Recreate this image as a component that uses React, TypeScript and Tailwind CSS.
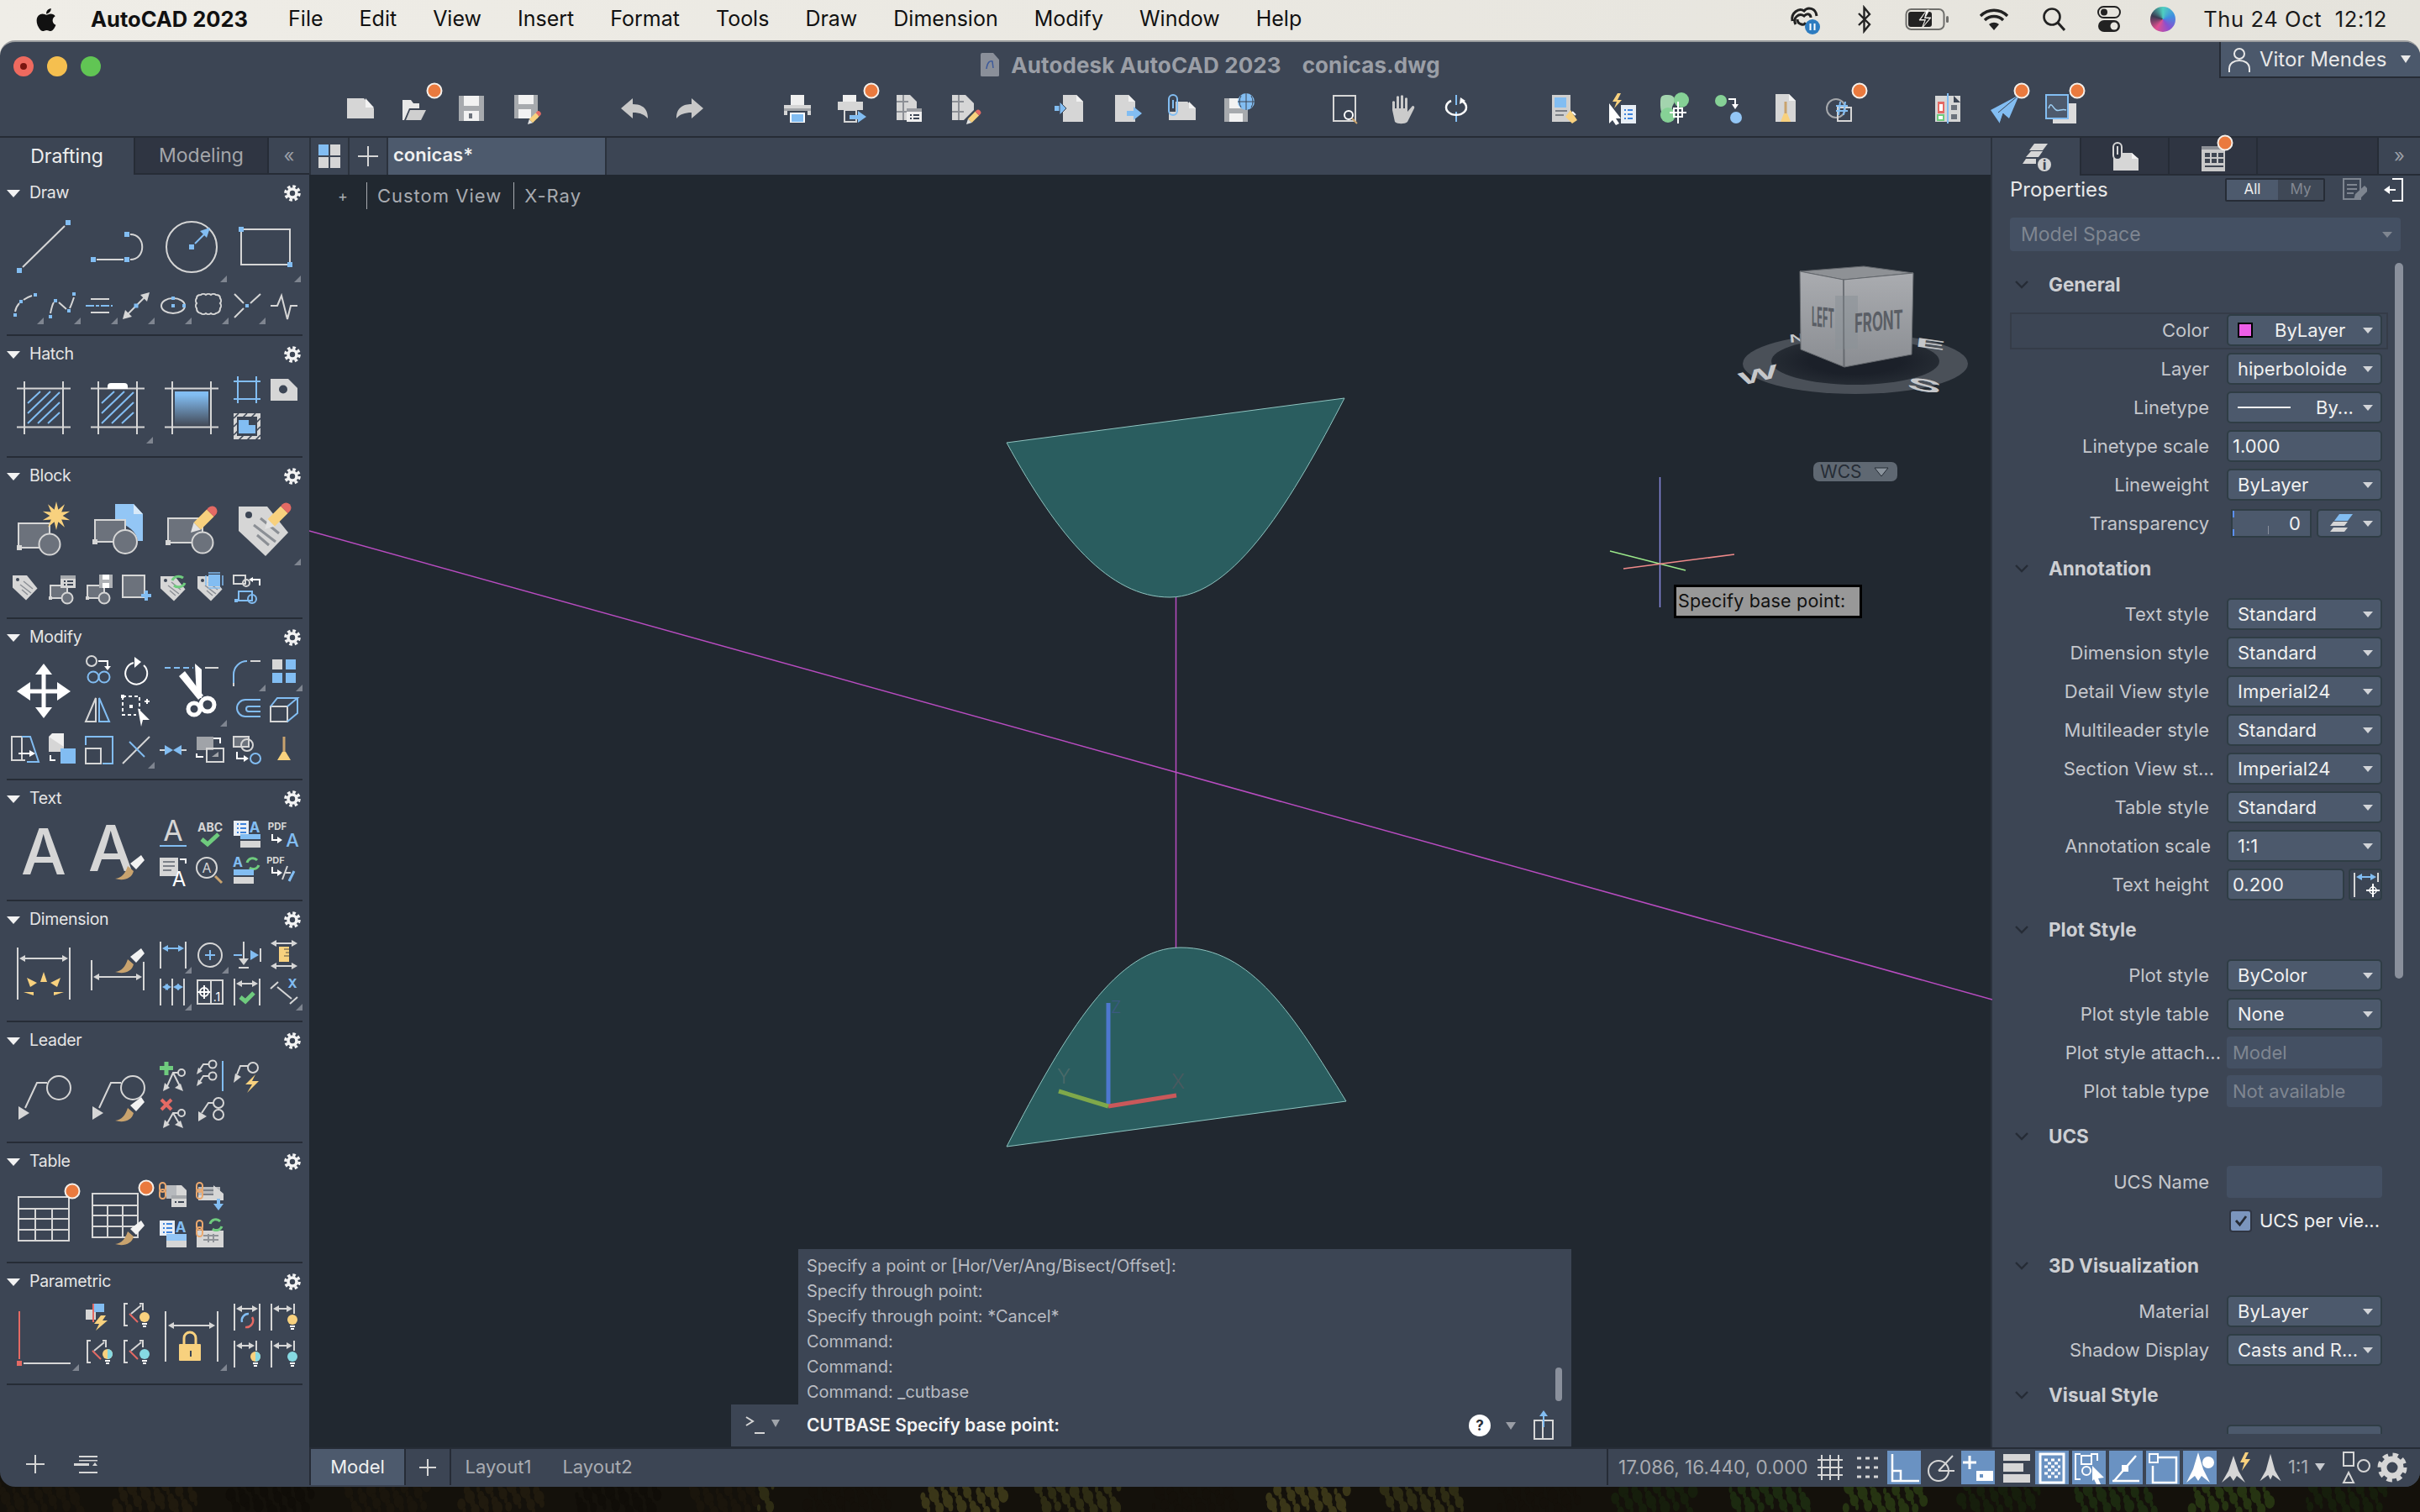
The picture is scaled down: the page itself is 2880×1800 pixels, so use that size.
import type { ReactNode } from 'react';
import { FaApple } from 'react-icons/fa';

const L = '#d6d6d6', W = '#ffffff', B = '#82bdf2', O = '#ea7a3e', Y = '#f8d17e', G = '#6fcb7e', R = '#e46a64', T = '#c9a36e', D = '#3c4554', M = '#6c727c', C = '#86d9e2';

// small drawing helpers, coordinates are real screen pixels
const ln = (d: string, c = L, w = 2, dash?: string) => <path d={d} fill="none" stroke={c} strokeWidth={w} strokeDasharray={dash} />;
const fl = (d: string, c = L) => <path d={d} fill={c} />;
const sq = (x: number, y: number, s = 6, c = B) => <rect x={x - s / 2} y={y - s / 2} width={s} height={s} fill={c} />;
const bx = (x: number, y: number, w: number, h: number, c = L, fill = 'none', sw = 2) => <rect x={x} y={y} width={w} height={h} stroke={c} fill={fill} strokeWidth={sw} />;
const re = (x: number, y: number, w: number, h: number, c = L) => <rect x={x} y={y} width={w} height={h} fill={c} />;
const ci = (x: number, y: number, r: number, c = L, w = 2, fill = 'none') => <circle cx={x} cy={y} r={r} stroke={c} strokeWidth={w} fill={fill} />;
const tx = (x: number, y: number, s: number, t: string, c = L, fw = 600, a: 'middle' | 'start' = 'middle') => (
  <text x={x} y={y} fontSize={s} fill={c} fontWeight={fw} textAnchor={a} fontFamily="Inter, sans-serif">{t}</text>
);
const brush = (x: number, y: number, s = 1) => (
  <g transform={`translate(${x} ${y}) scale(${s})`}>
    {fl('M0 0C8 -1 12 -6 15 -15L22 -9C20 0 10 3 0 0Z', T)}
    {fl('M18 -18L31 -28L35 -22L25 -11Z', '#f2f2f2')}
  </g>
);
const pencil = (x: number, y: number, s = 1) => (
  <g transform={`translate(${x} ${y}) rotate(-45) scale(${s})`}>
    {fl('M0 0L11 -6V6Z', '#e2e2e2')}
    {re(11, -6, 22, 12, Y)}
    {fl('M33 -6H36A6 6 0 0 1 36 6H33Z', R)}
  </g>
);
const tag = (x: number, y: number, s: number) => (
  <g transform={`translate(${x} ${y}) scale(${s})`}>
    {fl('M0 0H34L59 31L32 59L0 29Z')}
    {ci(12, 10, 4, D, 0, D)}
    {ln('M18 22L44 42M22 34L36 46M26 14L48 32', '#8b8f95', 3)}
  </g>
);
const bulb = (x: number, y: number, c = Y, c2?: string) => (
  <>
    {ci(x, y, 6, c, 0, c)}
    {c2 && fl(`M${x} ${y - 6}A6 6 0 0 1 ${x} ${y + 6}Z`, c2)}
    {re(x - 3, y + 7, 6, 2, W)}
    {re(x - 2, y + 10, 4, 2, W)}
  </>
);
const chain = (x: number, y: number) => (
  <>
    <rect x={x} y={y} width={7} height={11} rx={3.5} fill="none" stroke="#eaa86e" strokeWidth={2} />
    <rect x={x} y={y + 8} width={7} height={11} rx={3.5} fill="none" stroke="#eaa86e" strokeWidth={2} />
  </>
);
const miniBlock = (x: number, y: number, c = L) => (
  <>
    {bx(x, y, 20, 15, c, M)}
    {ci(x + 20, y + 15, 6.5, c, 2, M)}
    {sq(x, y + 15, 4, c)}
  </>
);
const star = (cx: number, cy: number, r: number, n = 10) => {
  const pts: string[] = [];
  for (let i = 0; i < n * 2; i++) {
    const rr = i % 2 ? r * 0.45 : r;
    const a = (Math.PI * i) / n - Math.PI / 2;
    pts.push(`${cx + rr * Math.cos(a)},${cy + rr * Math.sin(a)}`);
  }
  return <polygon points={pts.join(' ')} fill={Y} />;
};
const badge = (x: number, y: number) => <circle cx={x} cy={y} r={8.5} fill={O} stroke="#f5efe9" strokeWidth={2} />;
const arrowH = (x1: number, x2: number, y: number, c = L) => (
  <>
    {ln(`M${x1 + 4} ${y}H${x2 - 4}`, c)}
    {fl(`M${x1} ${y}L${x1 + 7} ${y - 4}V${y + 4}Z`, c)}
    {fl(`M${x2} ${y}L${x2 - 7} ${y - 4}V${y + 4}Z`, c)}
  </>
);

const Ic = ({ big, fly, children }: { big?: boolean; fly?: boolean; children?: ReactNode }) => (
  <svg viewBox={big ? '0 0 88 88' : '0 0 44 44'} className={big ? 'col-span-2 row-span-2 h-[88px] w-[88px] overflow-visible' : 'h-[44px] w-[44px] overflow-visible'}>
    {children}
    {fly && <path d={big ? 'M86 78V86H78Z' : 'M44 36V44H36Z'} fill="#7f8590" />}
  </svg>
);

const Gear = () => (
  <svg viewBox="0 0 20 20" className="h-[20px] w-[20px]">
    <circle cx="10" cy="10" r="8.1" fill="none" stroke="#f4f4f4" strokeWidth="3.4" strokeDasharray="3.6 2.76" />
    <circle cx="10" cy="10" r="5" fill="none" stroke="#f4f4f4" strokeWidth="3.6" />
  </svg>
);

const Section = ({ title, h, children }: { title: string; h: string; children: ReactNode }) => (
  <section className={`flex flex-col ${h}`}>
    <div className="flex h-[42px] flex-none items-center pl-[8px] pr-[10px] pt-[2px]">
      <span className="h-0 w-0 border-x-[8px] border-t-[9px] border-x-transparent border-t-[#f2f2f2]" />
      <span className="ml-[11px] flex-1 text-[19.5px] tracking-[-0.3px] text-[#e6e6e6]">{title}</span>
      <Gear />
    </div>
    <div className="pl-[8px]">{children}</div>
    <div className="mx-[8px] mt-auto h-[2px] flex-none bg-[#262c36]" />
  </section>
);

const Grid = ({ children, className = '' }: { children: ReactNode; className?: string }) => (
  <div className={`grid grid-cols-[repeat(8,44px)] auto-rows-[44px] ${className}`}>{children}</div>
);

const LeftPanel = () => (
  <div className="flex w-[368px] flex-none flex-col">
    <div className="flex h-[44px] flex-none">
      <div className="flex w-[159px] items-center justify-center text-[23px] text-[#eeeeee]">Drafting</div>
      <div className="flex w-[161px] items-center justify-center border-b-2 border-l-2 border-r-2 border-[#262c36] bg-[#2f3542] text-[23px] text-[#a4a6aa]">Modeling</div>
      <div className="flex w-[48px] items-center justify-center border-b-2 border-[#262c36] text-[22px] text-[#9a9ea6]">«</div>
    </div>

    <Section title="Draw" h="h-[192px]">
      <Grid>
        <Ic big>{ln('M19 68L69 19')}{sq(15, 72)}{sq(73, 15)}</Ic>
        <Ic big>{ln('M19 59H51')}{ln('M59 29C78 29 78 59 59 59')}{sq(15, 59)}{sq(55, 59)}{sq(55, 29)}</Ic>
        <Ic big fly>{ci(44, 44, 30)}{sq(44, 44)}{ln('M48 40L60 28', B)}{fl('M66 21L62 33L54 25Z', B)}</Ic>
        <Ic big fly>{bx(15, 23, 58, 42)}{sq(15, 23)}{sq(73, 65)}</Ic>
      </Grid>
      <Grid className="mt-[4px]">
        <Ic fly>{ln('M10 29C11 24 13 21 15 19M20 15C24 12 27 11 30 10')}{sq(10, 33, 4)}{sq(17, 17, 4)}{sq(34, 9, 4)}</Ic>
        <Ic fly>{ln('M8 31C9 26 10 21 12 18M18 18L27 26M31 25C33 21 35 15 36 12')}{sq(8, 35, 4)}{sq(14, 16, 4)}{sq(30, 28, 4)}{sq(36, 8, 4)}</Ic>
        <Ic fly>{ln('M12 14H34')}{ln('M6 22H38', B, 2, '10 2 4 2')}{ln('M12 30H34')}</Ic>
        <Ic fly>{ln('M10 34L34 10')}{fl('M6 38L9 27L17 35Z')}{fl('M38 6L35 17L27 9Z')}{sq(22, 22, 5)}</Ic>
        <Ic fly><ellipse cx="22" cy="22" rx="14" ry="9" fill="none" stroke={L} strokeWidth="2" />{sq(22, 13, 4)}{sq(22, 22, 4)}{sq(35, 22, 4)}</Ic>
        <Ic fly>{ln('M11 9a4 3 0 0 1 6 0a4 3 0 0 1 6 0a4 3 0 0 1 6 0q5 0 5 4a3 4 0 0 1 0 6a3 4 0 0 1 0 6q0 5 -5 6a4 3 0 0 1 -6 0a4 3 0 0 1 -6 0a4 3 0 0 1 -6 0q-5 -1 -5 -6a3 4 0 0 1 0 -6a3 4 0 0 1 0 -6q0 -4 5 -4Z')}</Ic>
        <Ic fly>{ln('M7 8L18 19M38 8L26 19M7 36L18 25')}{sq(22, 22, 4)}</Ic>
        <Ic>{ln('M6 22H14L19 10L26 38L30 22H38')}</Ic>
      </Grid>
    </Section>

    <Section title="Hatch" h="h-[145px]">
      <Grid>
        <Ic big>
          {ln('M21 12V75M67 12V75M12 20.5H76M12 66.5H76')}
          {ln('M25 38L40 24M25 50L52 24M25 62L63 25M37 62L63 37M49 62L63 49', B)}
        </Ic>
        <Ic big fly>
          {ln('M21 12V75M67 12V75M12 20.5H76M12 66.5H76')}
          {ln('M25 38L40 24M25 50L52 24M25 62L63 25M37 62L63 37M49 62L63 49', B)}
          {fl('M32 21V18Q32 14 36 14H52Q56 14 56 18V21Z', W)}
        </Ic>
        <Ic big>
          <defs><linearGradient id="grd" x1="0" y1="0" x2="0" y2="1"><stop offset="0.1" stopColor={B} /><stop offset="1" stopColor="#454d5b" /></linearGradient></defs>
          {ln('M21 12V75M67 12V75M12 20.5H76M12 66.5H76')}
          <rect x="24" y="24" width="40" height="40" fill="url(#grd)" />
        </Ic>
        <Ic>{ln('M11 6V38M33 6V38M6 12H38M6 33H38', B)}</Ic>
        <Ic>{fl('M6 9H27L38 20V35H6Z')}{ci(21, 21.5, 5, D, 0, D)}</Ic>
        <Ic>{bx(8, 8, 28, 27, L, 'none', 4)}{ln('M6 12L12 6M6 22L22 6M6 32L32 6M12 38L38 12M22 38L38 22M32 38L38 32', D, 1.6)}{fl('M12 14H24V20H32V30H12Z', B)}</Ic>
      </Grid>
    </Section>

    <Section title="Block" h="h-[192px]">
      <Grid>
        <Ic big>{bx(14, 36, 37, 29, L, M)}{ci(51, 61, 12.5, L, 2, M)}{sq(15, 65, 6, L)}{star(59, 27, 17)}</Ic>
        <Ic big>
          {fl('M41 13H63L74 25V57H68C66 45 58 40 41 32Z', '#93c6f5')}{fl('M63 13L74 25H63Z', '#d8e9f8')}
          {bx(17, 32, 36, 26, L, M)}{ci(53, 58, 14, L, 2, M)}{sq(17, 58, 6, L)}
        </Ic>
        <Ic big>{bx(16, 30, 41, 29, L, M)}{ci(57, 59, 12.5, L, 2, M)}{sq(16, 59, 6, L)}{pencil(43, 47)}</Ic>
        <Ic big fly>{tag(12, 16, 1)}{pencil(43, 43)}</Ic>
      </Grid>
      <Grid className="mt-[4px]">
        <Ic>{tag(7, 6, 0.5)}</Ic>
        <Ic>{miniBlock(8, 18)}{re(20, 6, 18, 15)}{re(20, 6, 18, 4, '#a5a8ac')}{ln('M24 13H26M24 17H26M28 13H35M28 17H35', D, 2)}</Ic>
        <Ic>{miniBlock(8, 18)}{re(22, 5, 16, 16, '#aeb1b5')}{re(26, 5, 8, 6, W)}{re(26, 15, 8, 6, W)}</Ic>
        <Ic>{bx(6, 6, 26, 26, L, M)}{re(28, 28, 12, 4, B)}{re(32, 24, 4, 12, B)}</Ic>
        <Ic>{tag(7, 7, 0.5)}{ln('M21 12A8 7 0 0 1 34 9M36 15A8 7 0 0 1 23 18', G, 3)}</Ic>
        <Ic>{tag(7, 7, 0.5)}{bx(21, 6, 12, 12, B, B)}{ln('M20 3H34M20 21H34M17 6V18M37 6V18', B, 1.5)}</Ic>
        <Ic>
          {bx(6, 6, 14, 10)}{ci(21, 15, 4)}{ln('M29 11H37V18', W)}{fl('M24 11L29 8V14Z', W)}
          {bx(12, 25, 16, 11, B)}{ci(28, 34, 5, B)}{sq(9, 36, 4)}
        </Ic>
      </Grid>
    </Section>

    <Section title="Modify" h="h-[192px]">
      <Grid>
        <Ic big>
          {ln('M44 20V68M20 44H68', W, 5)}
          {fl('M44 11L54 24H34Z', W)}{fl('M44 76L34 63H54Z', W)}{fl('M12 44L28 33V55Z', W)}{fl('M76 44L60 33V55Z', W)}
        </Ic>
        <Ic>{ci(13, 8, 6)}{ln('M21 8H32V14', W)}{fl('M28 14H36L32 19Z', W)}{ci(15, 27, 6.5, B)}{ci(28, 27, 6.5, B)}</Ic>
        <Ic>{ln('M19 10A13 13 0 1 0 31 13', W, 2)}{fl('M20 3L28 9L20 16Z', W)}</Ic>
        <Ic big fly>
          {ln('M12 16H46', B, 2, '7 4')}{ln('M60 16H76')}
          {fl('M48 11L56 18V52H50Z', W)}{fl('M29 26L36 20L58 49L52 54Z', W)}
          {ci(47, 65, 7, W, 5)}{ci(63, 60, 8, W, 5)}
        </Ic>
        <Ic fly>{ln('M6 38V24A16 16 0 0 1 22 8', B)}{ln('M26 8H38')}{ln('M6 38V34', L)}</Ic>
        <Ic fly>{re(8, 6, 12, 12)}{re(24, 6, 12, 12, B)}{re(8, 22, 12, 12, B)}{re(24, 22, 12, 12, B)}</Ic>
        <Ic>{ln('M18 36H6L18 8Z')}{ln('M22 36H34L22 8Z', B)}</Ic>
        <Ic>{ln('M6 6H26V24M6 6V28H22', W, 2, '4 3')}{sq(6, 6, 4, W)}{sq(16, 18, 4, W)}{fl('M24 20L38 34L30 34L28 42Z', W)}{ln('M32 12H38M35 9V15', W)}</Ic>
        <Ic>{ln('M38 10H20A10 10 0 0 0 20 30H38M38 18H24A3 3 0 0 0 24 24H38', B)}</Ic>
        <Ic>{bx(6, 18, 20, 18)}{ln('M6 18L14 8H38L26 18M38 8V26L26 36', B)}</Ic>
      </Grid>
      <Grid className="mt-[4px]">
        <Ic>{ln('M22 34H6V6H18M18 6V34')}{ln('M18 6H28L38 36H24', B)}{ln('M14 26H28', W)}{fl('M34 26L27 22V30Z', W)}</Ic>
        <Ic>{re(6, 6, 18, 18)}{fl('M6 6L10 2H24V18Z', '#efefef')}{re(20, 20, 18, 18, B)}{ln('M8 28V34H14', W)}</Ic>
        <Ic>{bx(6, 20, 18, 18)}{ln('M6 16V6H38V38H26', B)}</Ic>
        <Ic fly>{ln('M6 38L38 6')}{ln('M14 12L32 30', B)}</Ic>
        <Ic>{ln('M6 22H16M28 22H38')}{fl('M22 22L12 16V28Z', B)}{fl('M22 22L32 16V28Z', B)}</Ic>
        <Ic>{re(6, 6, 20, 16, '#a0a3a8')}{bx(18, 20, 20, 16)}{ln('M26 8H34V14', W)}{ln('M14 30H6V26', W)}{fl('M24 30L32 24V30Z', '#a0a3a8')}</Ic>
        <Ic>{bx(6, 6, 18, 12, L, M)}{ci(22, 16, 7)}{ln('M10 24V32H18', W)}{fl('M24 32L18 28V36Z', W)}{ci(32, 32, 6, B)}</Ic>
        <Ic>{ln('M22 6V26', T, 3)}{fl('M14 34L20 24H24L30 34Z', Y)}</Ic>
      </Grid>
    </Section>

    <Section title="Text" h="h-[144px]">
      <Grid>
        <Ic big>{tx(44, 70, 76, 'A', L, 500)}</Ic>
        <Ic big>{tx(36, 66, 76, 'A', L, 500)}{brush(41, 75)}</Ic>
        <Ic>{tx(22, 30, 34, 'A', L, 400)}{ln('M6 36H38', B)}</Ic>
        <Ic>{tx(22, 19, 14, 'ABC', L, 700)}{ln('M12 28L19 34L32 22', G, 5)}</Ic>
        <Ic>{re(6, 6, 18, 18, '#e8eef5')}{ln('M10 10H12M10 15H12M10 20H12M14 10H21M14 15H21M14 20H21', '#3d83dc')}{tx(31, 20, 17, 'A', B, 700)}{re(14, 22, 24, 6, B)}{re(14, 30, 24, 8)}</Ic>
        <Ic>{tx(14, 17, 11.5, 'PDF', L, 700)}{ln('M8 22V29H15', W)}{fl('M20 29L14 25V33Z', W)}{tx(32, 37, 22, 'A', B, 500)}</Ic>
        <Ic>{re(6, 6, 22, 22)}{ln('M10 11H24M10 16H24M10 21H20', '#7a7f87')}{ln('M30 8H37V13', W)}{tx(29, 40, 24, 'A', W, 400)}</Ic>
        <Ic>{ci(18, 18, 12, L)}{tx(18, 24, 16, 'A', L, 400)}{ln('M28 28L36 36', T, 3)}</Ic>
        <Ic>{tx(11, 17, 16, 'A', B, 700)}{ln('M22 12A7 7 0 0 1 34 9M36 15A7 7 0 0 1 25 18', G, 3)}{re(6, 20, 24, 7, B)}{re(6, 29, 24, 8)}</Ic>
        <Ic>{tx(12, 13, 11, 'PDF', L, 700)}{ln('M8 17V24H15', W)}{fl('M20 24L14 20V28Z', W)}{ln('M20 32L26 16M24 24H30')}{ln('M28 34L34 22', B, 3)}</Ic>
      </Grid>
    </Section>

    <Section title="Dimension" h="h-[144px]">
      <Grid>
        <Ic big>
          {ln('M13 13V75M75 13V75')}{arrowH(15, 73, 26)}
          {fl('M44 42L40 54H48Z', Y)}{fl('M24 49L28 60L36 55Z', Y)}{fl('M64 49L60 60L52 55Z', Y)}{fl('M20 66H32V70Z', Y)}{fl('M68 66H56V70Z', Y)}
        </Ic>
        <Ic big>{ln('M13 28V64M75 30V64')}{arrowH(15, 73, 48)}{brush(41, 42)}</Ic>
        <Ic fly>{ln('M7 6V38M37 6V38')}{arrowH(9, 35, 14, B)}</Ic>
        <Ic fly>{ci(22, 22, 14)}{ln('M22 16V28M16 22H28', B)}</Ic>
        <Ic>{ln('M18 6V28', L)}{fl('M18 34L12 26H24Z')}{ln('M12 37H24')}{ln('M6 22H16', B)}{fl('M36 22L26 16V28Z', B)}{ln('M38 14V30')}</Ic>
        <Ic>{arrowH(6, 38, 8)}{arrowH(6, 38, 35)}{re(16, 12, 12, 18, Y)}{ln('M22 15H28M24 19H28M22 23H28', '#8b7a55', 1.5)}</Ic>
        <Ic fly>{ln('M7 6V38M21 6V38M35 6V38')}{arrowH(9, 20, 16, B)}{arrowH(22, 34, 16, B)}</Ic>
        <Ic>{bx(7, 8, 30, 28)}{ln('M23 8V36')}{ci(15, 22, 5, W)}{ln('M15 14V30M7 22H22', W)}{tx(30, 33, 14, '.1', W, 400)}</Ic>
        <Ic>{ln('M7 6V38M37 6V38')}{arrowH(9, 35, 12)}{ln('M14 28L20 33L30 23', G, 5)}</Ic>
        <Ic fly>{ln('M6 18L15 10M29 36L38 28')}{ln('M14 16L31 30')}{tx(32, 17, 15, 'X', B, 700)}</Ic>
      </Grid>
    </Section>

    <Section title="Leader" h="h-[144px]">
      <Grid>
        <Ic big>{ci(62, 36, 14)}{ln('M48 30H36L22 60')}{fl('M14 74L14 58L27 66Z')}</Ic>
        <Ic big>{ci(62, 36, 14)}{ln('M48 30H36L22 60')}{fl('M14 74L14 58L27 66Z')}{brush(41, 75)}</Ic>
        <Ic>{re(6, 10, 16, 5, G)}{re(11.5, 5, 5, 16, G)}{ci(32, 18, 4)}{ln('M28 18H22L14 36M22 18L30 34')}{fl('M10 40L12 30L18 36Z')}{fl('M34 40L24 36L31 31Z')}</Ic>
        <Ic>{ci(25, 8, 4.5)}{ci(25, 22, 4.5)}{ln('M20 8H14L10 14M20 22H14L10 28')}{fl('M6 20L8 12L13 16Z')}{fl('M6 34L8 26L13 30Z')}{ln('M37 4V40', B, 2)}</Ic>
        <Ic>{ci(29, 12, 6)}{ln('M23 10H14L10 20')}{fl('M6 30L8 19L15 23Z')}{fl('M32 20L20 32H28L22 42L36 28H28Z', Y)}</Ic>
        <Ic />
        <Ic>{ln('M8 6L20 18M20 6L8 18', R, 4)}{ci(32, 22, 4)}{ln('M28 22H22L14 36M22 22L30 36')}{fl('M10 40L12 30L18 36Z')}{fl('M34 40L24 36L31 31Z')}</Ic>
        <Ic>{ci(32, 10, 6)}{ci(32, 24, 6)}{ln('M26 10H20L12 22')}{fl('M8 32L8 20L18 26Z')}</Ic>
      </Grid>
    </Section>

    <Section title="Table" h="h-[143px]">
      <Grid>
        <Ic big>
          {bx(14, 22, 60, 52)}{ln('M14 36H74M14 48H74M14 61H74M34 36V74M54 36V74')}{badge(78, 15)}
        </Ic>
        <Ic big>
          {bx(14, 18, 54, 52)}{ln('M14 32H68M14 44H68M14 57H68M32 32V70M50 32V70')}{badge(78, 11)}{brush(41, 78)}
        </Ic>
        <Ic>{re(14, 8, 18, 16, '#b6b9bd')}{fl('M26 8H32L38 14V24H26Z')}{chain(6, 5)}{re(20, 20, 18, 14)}{re(20, 20, 18, 4, '#a5a8ac')}{ln('M24 28H26M28 28H35', D)}</Ic>
        <Ic>{re(8, 10, 26, 14, '#b6b9bd')}{fl('M26 8L38 18V26H8V20H26Z')}{chain(6, 5)}{ln('M14 14H26M14 19H26', '#7a7f87')}{re(30, 24, 4, 8, B)}{fl('M26 30H38L32 38Z', B)}</Ic>
        <Ic />
        <Ic />
        <Ic>{re(6, 6, 18, 18, '#e8eef5')}{ln('M10 10H12M10 15H12M10 20H12M14 10H21M14 15H21M14 20H21', '#3d83dc')}{tx(31, 20, 17, 'A', B, 700)}{re(14, 22, 24, 8, '#93c6f5')}{re(14, 30, 24, 8)}</Ic>
        <Ic>{re(6, 18, 32, 20)}{chain(6, 6)}{ln('M22 10A7 7 0 0 1 34 7M36 13A7 7 0 0 1 25 16', G, 3)}{ln('M14 24H32M14 29H32M20 22V32M26 22V32', '#8f9398')}</Ic>
      </Grid>
    </Section>

    <Section title="Parametric" h="h-[145px]">
      <Grid>
        <Ic big fly>{ln('M15 15V72', R)}{re(12, 74, 6, 6, R)}{ln('M20 77H76')}</Ic>
        <Ic>{re(6, 13, 12, 12)}{ln('M15 6V28', R)}{re(16, 6, 12, 10, B)}{fl('M24 20L16 30H22L18 38L32 26H26L30 20Z', Y)}</Ic>
        <Ic>{ln('M12 6H8V32H12M26 6H30V14')}{ln('M14 18L24 28', R)}{ln('M16 18L28 8')}{bulb(32, 22)}</Ic>
        <Ic big fly>{ln('M13 15V75M75 15V75')}{arrowH(16, 72, 32)}<rect x="29" y="54" width="26" height="20" rx="1" fill={Y} /><path d="M35 54V47A7 7 0 0 1 49 47V54" fill="none" stroke={Y} strokeWidth="3" />{re(42, 62, 2, 7, D)}</Ic>
        <Ic>{ln('M7 6V38M37 6V38')}{arrowH(9, 35, 12)}{ln('M16 28A8 8 0 0 1 24 18', B, 2.5)}{ln('M28 22A8 8 0 0 1 20 34', R, 2.5)}</Ic>
        <Ic>{ln('M7 6V38M34 6V18')}{arrowH(9, 32, 12)}{bulb(32, 25)}</Ic>
        <Ic>{ln('M12 6H8V32H12M26 6H30V14')}{ln('M14 18L24 28', R)}{ln('M16 18L28 8')}{bulb(32, 22, Y, C)}</Ic>
        <Ic>{ln('M12 6H8V32H12M26 6H30V14')}{ln('M14 18L24 28', R)}{ln('M16 18L28 8')}{bulb(32, 22, C)}</Ic>
        <Ic>{ln('M7 6V38M33 6V18')}{arrowH(9, 31, 12)}{bulb(32, 25, Y, C)}</Ic>
        <Ic>{ln('M7 6V38M34 6V18')}{arrowH(9, 32, 12)}{bulb(32, 25, C)}</Ic>
      </Grid>
    </Section>

    <div className="mt-[82px] flex items-center pl-[30px]">
      <svg viewBox="0 0 24 24" className="h-[24px] w-[24px]">{ln('M12 1V23M1 12H23', L)}</svg>
      <svg viewBox="0 0 28 22" className="ml-[34px] h-[22px] w-[28px]">{ln('M6 2H28M6 21H28', L, 2)}{re(0, 10, 18, 3, L)}{re(6, 6, 22, 1.5, L)}{fl('M22 13L25 9L28 13Z')}</svg>
    </div>
  </div>
);

const Bar = ({ children, className = '' }: { children?: ReactNode; className?: string }) => (
  <svg viewBox="-11 -11 66 66" className={`h-[66px] w-[66px] flex-none overflow-visible ${className}`}>{children}</svg>
);

const Toolbar = () => (
  <div className="flex h-[66px] flex-none gap-[62px] pl-[396px]">
    <div className="flex">
      <Bar>{fl('M6 10H26L38 22V34H6Z')}{fl('M28 10L38 21H28Z', '#f2f2f2')}</Bar>
      <Bar>{fl('M6 12H16L19 16H26V22H14L8 36H6Z', '#e8e8e8')}{fl('M15 24H34L28 36H10Z', '#cfcfcf')}{badge(44, 1)}</Bar>
      <Bar>{re(7, 7, 30, 30, '#a7aaae')}{re(13, 7, 18, 12, '#f2f2f2')}{re(13, 25, 18, 12, '#f2f2f2')}{re(19, 28, 4, 6, M)}</Bar>
      <Bar>{re(7, 6, 28, 28, '#a7aaae')}{re(12, 6, 18, 11, '#f2f2f2')}{re(12, 23, 15, 11, '#f2f2f2')}{pencil(23, 41, 0.5)}</Bar>
    </div>
    <div className="flex">
      <Bar>{fl('M6 22L20 10V17C30 17 38 21 38 34C34 29 28 27 20 27V34Z', '#c8c8c8')}</Bar>
      <Bar>{fl('M38 22L24 10V17C14 17 6 21 6 34C10 29 16 27 24 27V34Z', '#c8c8c8')}</Bar>
    </div>
    <div className="flex">
      <Bar>{re(14, 6, 16, 12, '#efefef')}{fl('M6 18H38V30H34V24H10V30H6Z', '#d6d6d6')}{re(6, 22, 32, 3, '#a2a5a9')}{re(13, 27, 18, 12, W)}{re(15, 29, 14, 9, B)}</Bar>
      <Bar>{re(10, 6, 16, 10, '#efefef')}{re(4, 14, 30, 10)}{bx(12, 24, 14, 14, L, D)}{re(18, 30, 12, 5, B)}{fl('M38 32L28 25V39Z', B)}{badge(44, 1)}</Bar>
      <Bar>{fl('M8 6H24L32 14V24H22V36H8Z')}{ln('M8 14H22M16 6V36M8 26H22', '#8d9096')}{re(20, 22, 18, 16, '#efefef')}{re(20, 22, 18, 4, '#9a9da2')}{ln('M24 30H26M28 30H35M24 34H26M28 34H35', D)}</Bar>
      <Bar>{fl('M8 6H24L34 16V24L22 36H8Z')}{ln('M8 14H22M16 6V36M8 26H22', '#8d9096')}{pencil(25, 41, 0.55)}</Bar>
    </div>
    <div className="flex">
      <Bar>{fl('M12 6H28L36 14V38H12Z')}{fl('M28 6L36 14H28Z', '#f2f2f2')}{fl('M16 22L8 14V19H2V25H8V30Z', B)}{ln('M16 22L8 14V30Z', D, 1)}</Bar>
      <Bar>{fl('M8 6H24L32 14V38H8Z')}{fl('M24 6L32 14H24Z', '#f2f2f2')}{fl('M40 28L30 20V25H22V31H30V36Z', B)}</Bar>
      <Bar>{fl('M14 14H28L38 22V36H6V26H14Z')}{fl('M30 14L38 22H30Z', '#f2f2f2')}<rect x="6" y="6" width="10" height="24" rx="5" fill="none" stroke={B} strokeWidth="2" />{ln('M11 12V22', B)}</Bar>
      <Bar>{re(6, 10, 28, 28, '#a7aaae')}{re(12, 10, 14, 12, '#f2f2f2')}{re(12, 28, 16, 10, '#f2f2f2')}{ci(32, 14, 10, B, 0, B)}{ln('M22 14H42M32 4V24M26 7A14 14 0 0 0 26 21M38 7A14 14 0 0 1 38 21', D, 1)}</Bar>
    </div>
    <div className="flex">
      <Bar>{bx(8, 7, 26, 30)}{ci(26, 30, 5, W)}{ln('M30 34L36 40', T, 2)}</Bar>
      <Bar>{fl('M12 24V14A2 2 0 0 1 15 14V22H17V8A2 2 0 0 1 20 8V22H22V7A2 2 0 0 1 25 7V22H27V10A2 2 0 0 1 30 10V26L36 19A2 2 0 0 1 38 22L30 38C27 41 18 41 15 38Z', '#cbcbcb')}</Bar>
      <Bar>{ln('M22 6V18', B)}{ln('M22 26V38', B)}{ln('M16 13A12 9 0 1 0 28 13', W, 2.5)}{fl('M27 9L33 13L26 17Z', W)}</Bar>
    </div>
    <div className="flex">
      <Bar>{re(8, 6, 22, 32, '#cfcfcf')}{re(11, 9, 14, 12, B)}{ln('M12 25H26M12 30H22', '#7b7f86')}{fl('M24 32L30 24L38 36L32 40Z', Y)}{ln('M32 26L36 30', W, 2)}</Bar>
      <Bar>{fl('M10 16L24 34H18L22 40L18 42L14 36L10 40Z', W)}{fl('M20 4L14 14H19L16 22L25 12H20L24 4Z', Y)}{re(24, 18, 18, 22, '#e8eef5')}{ln('M28 24H30M32 24H38M28 29H30M32 29H38M28 34H30M32 34H38', '#3d83dc')}</Bar>
      <Bar>{fl('M14 6C5 6 5 8 5 18C5 26 8 34 16 34C24 34 16 24 20 18C24 12 22 6 14 6Z', '#a3d4ae')}{ci(30, 12, 9, G, 0, '#86d196')}{ci(14, 30, 9, G, 0, '#86d196')}{ln('M26 14V40M16 27H36', W, 2)}{bx(21, 22, 10, 10, W)}</Bar>
      <Bar>{ci(11, 13, 7, G, 0, '#86d196')}{ci(29, 33, 7, B, 0, '#93c6f5')}{ln('M20 11H28V18', W)}{fl('M24 17H32L28 23Z', W)}</Bar>
      <Bar>{fl('M10 5H26L34 13V38H10Z')}{fl('M26 5L34 13H26Z', '#f2f2f2')}{ln('M22 14V30', T, 3)}{fl('M16 38L20 28H24L28 38Z', Y)}</Bar>
      <Bar>{ci(16, 22, 11, '#a4a7ab', 2)}{bx(18, 21, 16, 16)}{ln('M21 14L19 30M27 14L25 30M16 19H30M16 25H30', B)}{badge(44, 1)}</Bar>
    </div>
    <div className="flex">
      <Bar>{fl('M6 7H36V38H6Z')}{fl('M28 7L36 15H28Z', D)}{ln('M21 4V40', B, 2)}{re(9, 14, 8, 14, R)}{re(11, 17, 4, 8, W)}{bx(9, 30, 7, 6, G, W)}{re(25, 18, 7, 6, M)}{re(25, 29, 7, 6, M)}</Bar>
      <Bar>{fl('M6 24L40 6L28 34L21 28L17 40Z', B)}{ln('M15 27L40 6M17 40L21 28', D, 1)}{badge(43, 1)}</Bar>
      <Bar>{re(14, 16, 28, 24, '#dcdcdc')}{bx(6, 6, 26, 28, B, '#4d5a6d')}{ln('M9 22C12 12 14 22 18 24C22 26 24 22 30 24', '#9fd0f5', 1.5)}{badge(43, 1)}</Bar>
    </div>
  </div>
);

const Caret = () => <span className="h-0 w-0 border-x-[6px] border-t-[7px] border-x-transparent border-t-[#d2d4d8]" />;

type FieldProps = { v?: string; kind?: 'select' | 'input' | 'off'; children?: ReactNode };

const Field = ({ v, kind = 'select', children }: FieldProps) => {
  if (kind === 'off')
    return <div className="flex h-[38px] w-[185px] items-center rounded-[4px] bg-[#445063] pl-[7px] text-[22px] text-[#7f8691]">{v}</div>;
  return (
    <div className={`flex h-[38px] w-[185px] items-center rounded-[5px] border-2 border-[#2f3d45] bg-[#4c596c] text-[22px] text-[#f0f0f0] ${kind === 'input' ? 'pl-[5px]' : 'pl-[11px] pr-[9px]'}`}>
      <span className="flex min-w-0 flex-1 items-center whitespace-nowrap">{children ?? v}</span>
      {kind === 'select' && <Caret />}
    </div>
  );
};

const Row = ({ label, over = '', children }: { label?: string; over?: string; children: ReactNode }) => (
  <div className="flex h-[46px] items-center">
    <div className={`w-[258px] whitespace-nowrap text-right text-[22px] text-[#c5c7cc] ${over}`}>{label}</div>
    <div className="ml-[21px] flex">{children}</div>
  </div>
);

const Head = ({ t }: { t: string }) => (
  <div className="flex h-[62px] items-center pl-[27px]">
    <svg viewBox="0 0 16 10" className="h-[10px] w-[16px]">{ln('M1 1L8 8L15 1', '#262c36', 2.4)}</svg>
    <span className="ml-[24px] text-[22.5px] font-bold text-[#cdcfd3]">{t}</span>
  </div>
);

const RightPanel = () => (
  <div className="flex w-[509px] flex-none flex-col">
    <div className="flex h-[45px] flex-none">
      <div className="flex w-[104px] items-center justify-center">
        <svg viewBox="0 0 44 44" className="h-[44px] w-[44px]">{fl('M14 14L20 6H36L30 14Z')}{fl('M10 22L16 15H30L25 22Z')}{fl('M6 30L10 24H22V30Z')}{ci(32, 31, 8, L, 0, L)}{tx(32, 37, 15, 'i', D, 800)}</svg>
      </div>
      <div className="flex w-[105px] items-center justify-center border-b-2 border-l-2 border-[#262c36] bg-[#2f3542]">
        <svg viewBox="0 0 44 44" className="h-[44px] w-[44px]">{fl('M8 18H30L38 25V39H8Z')}{fl('M30 18L38 25H30Z', '#f2f2f2')}<rect x="8" y="6" width="10" height="20" rx="5" fill="#2f3542" stroke={L} strokeWidth="2" />{ln('M13 10V20', L)}</svg>
      </div>
      <div className="flex w-[105px] items-center justify-center border-b-2 border-l-2 border-[#262c36] bg-[#2f3542]">
        <svg viewBox="0 0 44 44" className="h-[44px] w-[44px] overflow-visible">{re(8, 10, 28, 30, '#c9c9c9')}{re(8, 10, 28, 4, '#8d9096')}{re(12, 18, 6, 5, '#3f4652')}{re(20, 18, 6, 5, '#3f4652')}{re(28, 18, 6, 5, '#3f4652')}{re(12, 25, 6, 5, '#3f4652')}{re(20, 25, 6, 5, '#3f4652')}{re(28, 25, 6, 5, '#3f4652')}{ln('M12 34H34', '#3f4652')}{badge(36, 6)}</svg>
      </div>
      <div className="w-[146px] border-b-2 border-l-2 border-r-2 border-[#262c36] bg-[#2f3542]" />
      <div className="flex w-[49px] items-center justify-center border-b-2 border-[#262c36] text-[22px] text-[#9a9ea6]">»</div>
    </div>

    <div className="relative flex h-[34px] flex-none items-center pl-[21px] pr-[19px]">
      <span className="flex-1 text-[24px] text-[#e8e8e8]">Properties</span>
      <div className="flex h-[28px] w-[119px] rounded-[2px] border-2 border-[#262c36] text-[17px]">
        <div className="flex w-[61px] items-center justify-center bg-[#4d5a6d] text-[#eeeeee]">All</div>
        <div className="flex flex-1 items-center justify-center bg-[#3f4856] text-[#838993]">My</div>
      </div>
      <svg viewBox="0 0 30 30" className="ml-[20px] h-[30px] w-[30px]">{bx(2, 2, 20, 24, '#7e8590')}{ln('M6 9H18M6 14H18M6 19H14', '#7e8590')}{fl('M14 27L16 20L27 10L32 15L21 26Z', '#7e8590')}</svg>
      <svg viewBox="0 0 24 30" className="ml-[20px] h-[30px] w-[24px]">{ln('M10 2H22V28H10', W)}{ln('M2 15H14', W)}{fl('M0 15L7 10V20Z', W)}</svg>
    </div>

    <div className="ml-[21px] mt-[16px] flex h-[40px] w-[465px] flex-none items-center justify-between rounded-[4px] bg-[#445063] pl-[13px] pr-[10px] text-[23px] text-[#7f8691]">
      Model Space
      <span className="h-0 w-0 border-x-[6px] border-t-[7px] border-x-transparent border-t-[#7f8691]" />
    </div>

    <div className="relative mt-[9px] h-[1399px] flex-none overflow-hidden">
      <div className="absolute left-[479px] top-[5px] h-[852px] w-[10px] rounded-full bg-[#8a909c]" />
      <div className="absolute left-[21px] top-[64px] h-[44px] w-[450px] border-2 border-[#353c48]" />
      <Head t="General" />
      <Row label="Color">
        <Field>
          <span className="h-[18px] w-[18px] border-2 border-black bg-[#ee5ee8]" />
          <span className="ml-[26px]">ByLayer</span>
        </Field>
      </Row>
      <Row label="Layer"><Field v="hiperboloide" /></Row>
      <Row label="Linetype">
        <Field>
          <span className="h-[2px] w-[63px] bg-[#f0f0f0]" />
          <span className="ml-[30px]">By...</span>
        </Field>
      </Row>
      <Row label="Linetype scale"><Field kind="input" v="1.000" /></Row>
      <Row label="Lineweight"><Field v="ByLayer" /></Row>
      <Row label="Transparency">
        <div className="ml-[5px] flex">
          <div className="relative flex h-[34px] w-[96px] items-center justify-end border-2 border-[#2f3d45] bg-[#4c596c] pr-[11px] text-[22px] text-[#f0f0f0]">
            <span className="absolute left-0 top-0 h-[8px] w-[2px] bg-[#5b8ff0]" />
            <span className="absolute bottom-0 left-0 h-[8px] w-[2px] bg-[#5b8ff0]" />
            <span className="absolute bottom-[2px] left-[42px] h-[10px] w-[1px] bg-[#8a909c]" />
            0
          </div>
          <div className="ml-[6px] flex h-[34px] w-[78px] items-center justify-between rounded-[5px] border-2 border-[#2f3d45] bg-[#4c596c] pl-[13px] pr-[9px]">
            <svg viewBox="0 0 28 24" className="h-[24px] w-[28px]">{fl('M6 9L12 1H28L22 9Z', B)}{fl('M1 15L5 10H22L18 15Z')}{fl('M1 22L5 17H22L18 22Z')}</svg>
            <Caret />
          </div>
        </div>
      </Row>
      <Head t="Annotation" />
      <Row label="Text style"><Field v="Standard" /></Row>
      <Row label="Dimension style"><Field v="Standard" /></Row>
      <Row label="Detail View style"><Field v="Imperial24" /></Row>
      <Row label="Multileader style"><Field v="Standard" /></Row>
      <Row label="Section View st..." over="translate-x-[6px]"><Field v="Imperial24" /></Row>
      <Row label="Table style"><Field v="Standard" /></Row>
      <Row label="Annotation scale" over="translate-x-[2px]"><Field v="1:1" /></Row>
      <Row label="Text height">
        <div className="flex h-[38px] w-[140px] items-center rounded-[5px] border-2 border-[#2f3d45] bg-[#4c596c] pl-[5px] text-[22px] text-[#f0f0f0]">0.200</div>
        <div className="ml-[5px] flex h-[38px] w-[40px] items-center justify-center rounded-[4px] border-2 border-[#2f3d45]">
          <svg viewBox="0 0 34 34" className="h-[34px] w-[34px]">{ln('M4 3V32M32 3V14')}{arrowH(6, 30, 8, B)}{ci(26, 24, 4, W, 1.5)}{ln('M26 16V32M18 24H34', W)}</svg>
        </div>
      </Row>
      <Head t="Plot Style" />
      <Row label="Plot style"><Field v="ByColor" /></Row>
      <Row label="Plot style table"><Field v="None" /></Row>
      <Row label="Plot style attach..." over="translate-x-[14px]"><Field kind="off" v="Model" /></Row>
      <Row label="Plot table type"><Field kind="off" v="Not available" /></Row>
      <Head t="UCS" />
      <Row label="UCS Name"><Field kind="off" /></Row>
      <div className="flex h-[46px] items-center pl-[282px]">
        <span className="flex h-[27px] w-[27px] items-center justify-center rounded-[4px] border-2 border-[#2f3542] bg-[#7b95bd]">
          <svg viewBox="0 0 18 18" className="h-[18px] w-[18px]">{ln('M3 9L7.5 14L15 4', '#262c36', 2.8)}</svg>
        </span>
        <span className="ml-[9px] whitespace-nowrap text-[22px] text-[#f0f0f0]">UCS per vie...</span>
      </div>
      <Head t="3D Visualization" />
      <Row label="Material"><Field v="ByLayer" /></Row>
      <Row label="Shadow Display"><Field v="Casts and R..." /></Row>
      <Head t="Visual Style" />
      {/* next row is scrolled away, only the top edge of its field shows */}
      <Row><Field /></Row>
    </div>
  </div>
);

const Stat = ({ on, children }: { on?: boolean; children: ReactNode }) => (
  <div className="flex h-[44px] w-[44px] flex-none items-center justify-center">
    <svg viewBox="0 0 40 40" className={`h-[40px] w-[40px] ${on ? 'bg-[#6a92c2]' : ''}`}>{children}</svg>
  </div>
);

const StatusBar = () => (
  <div className="flex h-[47px] flex-none items-center border-t-2 border-[#262c36] bg-[#3c4554] pb-[2px]">
    <div className="flex h-full w-[113px] flex-none items-center justify-center border-l-2 border-[#262c36] bg-[#4d5a6d] text-[22px] text-[#f0f0f0]">Model</div>
    <div className="flex h-full w-[56px] flex-none items-center justify-center border-l-2 border-r-2 border-[#262c36]">
      <svg viewBox="0 0 24 24" className="h-[24px] w-[24px]">{ln('M12 2V22M2 12H22', L)}</svg>
    </div>
    <div className="w-[112px] flex-none text-center text-[22px] text-[#a9acb2]">Layout1</div>
    <div className="w-[124px] flex-none text-center text-[22px] text-[#a9acb2]">Layout2</div>
    <div className="ml-[1139px] flex h-full w-[244px] flex-none items-center whitespace-nowrap border-l-2 border-[#262c36] pl-[12px] text-[22.5px] text-[#a9acb2]">17.086, 16.440, 0.000</div>
    <Stat>{ln('M10 5V35M20 5V35M30 5V35M5 11H35M5 20H35M5 29H35', L)}</Stat>
    <Stat>{ln('M8 9H13M18 9H23M28 9H33M8 20H13M18 20H23M28 20H33M8 31H13M18 31H23M28 31H33', L, 3)}</Stat>
    <Stat on>{ln('M6 4V36H38M6 24H16V36', W, 2.5)}</Stat>
    <Stat>{ci(17, 24, 12, L, 2)}{ln('M17 24L34 6M17 24H36', L)}</Stat>
    <Stat on>{ln('M10 6V22M2 14H18', W, 3)}{re(18, 24, 20, 12, W)}{re(22, 28, 4, 4, '#6a92c2')}</Stat>
    <Stat>{re(6, 4, 32, 8, L)}{re(6, 15, 24, 10, L)}{re(6, 28, 32, 10, L)}</Stat>
    <Stat on>{bx(6, 4, 28, 34, W, 'none', 3)}{ln('M11 11H15M19 11H23M27 11H30M15 15H19M23 15H27M11 19H15M19 19H23M27 19H30M15 23H19M23 23H27M11 27H15M19 27H23M27 27H30M15 31H19M23 31H27', W, 3)}</Stat>
    <Stat on>{ln('M10 4H4V34H10M22 4H30V12', W)}{bx(11, 6, 12, 10, W)}{ci(17, 24, 5, W, 2)}{fl('M24 18L38 32L31 33L34 40L29 40L26 34L24 36Z', W)}</Stat>
    <Stat on>{ln('M4 36H36M6 36L32 6', W, 2.5)}{sq(19, 21, 8, W)}</Stat>
    <Stat on>{bx(4, 4, 10, 10, W)}{ln('M14 8H36V38H8V18', W, 2.5)}</Stat>
    <Stat on>{fl('M18 2L24 22L32 38L22 30L18 36L14 30L4 38L12 22Z', W)}{ci(30, 14, 7, W, 0, W)}</Stat>
    <Stat>{fl('M16 6L22 24L30 38L20 30L16 36L12 30L2 38L10 24Z')}{fl('M30 2L24 14H29L26 24L36 10H30L34 2Z', Y)}</Stat>
    <div className="flex w-[36px] flex-none justify-center">
      <svg viewBox="0 0 40 40" className="h-[40px] w-[40px]">{fl('M20 2L26 24L34 38L23 30L20 36L17 30L6 38L14 24Z')}</svg>
    </div>
    <span className="ml-[3px] text-[22px] text-[#a9acb2]">1:1</span>
    <span className="ml-[8px] h-0 w-0 border-x-[6px] border-t-[9px] border-x-transparent border-t-[#c8cacf]" />
    <div className="ml-[16px] flex-none">
      <svg viewBox="0 0 40 40" className="h-[40px] w-[40px]">{bx(6, 2, 12, 16, L)}{ci(30, 18, 7, L)}{ln('M12 26L18 38H6Z', L)}</svg>
    </div>
    <svg viewBox="0 0 40 40" className="ml-[4px] h-[40px] w-[40px]">
      <circle cx="20" cy="20" r="14" fill="none" stroke={L} strokeWidth="7" strokeDasharray="6 5" />
      <circle cx="20" cy="20" r="10" fill="none" stroke={L} strokeWidth="7" />
    </svg>
  </div>
);

const Drawing = () => (
  <svg viewBox="368 208 2003 1515" className="absolute inset-0 h-[1515px] w-[2003px]">
    <defs>
      <linearGradient id="cubeL" x1="0" y1="0" x2="0" y2="1"><stop offset="0" stopColor="#aaacb0" /><stop offset="1" stopColor="#8a8d92" /></linearGradient>
      <radialGradient id="well"><stop offset="0.55" stopColor="#1b2029" /><stop offset="1" stopColor="#252b33" /></radialGradient>
    </defs>
    <path d="M368 632L2371 1190" stroke="#b84cc0" strokeWidth="1.5" fill="none" />
    <path d="M1399.5 711V1130" stroke="#b84cc0" strokeWidth="1.5" fill="none" />
    <path d="M1198 527L1600 474C1540 590 1470 711 1392 711C1320 711 1260 640 1198 527Z" fill="#2a5d5f" stroke="#8fc4c0" strokeWidth="1" />
    <path d="M1198 1365L1602 1311C1540 1210 1490 1128 1405 1128C1330 1128 1270 1225 1198 1365Z" fill="#2a5d5f" stroke="#8fc4c0" strokeWidth="1" />

    {/* UCS icon */}
    <path d="M1319 1317V1194" stroke="#4d78cf" strokeWidth="5" fill="none" />
    <path d="M1319 1317L1400 1304" stroke="#c9585a" strokeWidth="5" fill="none" />
    <path d="M1319 1317L1260 1299" stroke="#7fa84a" strokeWidth="5" fill="none" />
    <text x="1394" y="1296" fontSize="24" fill="#4a5a60" fontFamily="Inter, sans-serif" fontWeight="300">X</text>
    <text x="1258" y="1290" fontSize="24" fill="#4a6a6a" fontFamily="Inter, sans-serif" fontWeight="300">Y</text>
    <text x="1322" y="1206" fontSize="20" fill="#3b5a80" fontFamily="Inter, sans-serif" fontWeight="300">Z</text>

    {/* view cube */}
    <ellipse cx="2208" cy="433" rx="134" ry="36" fill="#4a5058" />
    <ellipse cx="2208" cy="430" rx="100" ry="28" fill="url(#well)" />
    <g fill="#c5c7ca" fontFamily="Inter, sans-serif" fontWeight="600" fontSize="26">
      <text transform="translate(2070 460) rotate(-14) scale(1.9 .8)">W</text>
      <text transform="translate(2268 462) rotate(10) scale(2.5 .75)">S</text>
      <text transform="translate(2278 412) rotate(8) scale(2.4 .55)">E</text>
      <text transform="translate(2130 408) rotate(-6) scale(.9 .5)">N</text>
    </g>
    <polygon points="2142,323 2218,317 2277,325 2194,333" fill="#8e9195" stroke="#63676c" strokeWidth="1" />
    <polygon points="2142,323 2194,333 2195,437 2143,416" fill="url(#cubeL)" stroke="#63676c" strokeWidth="1" />
    <polygon points="2194,333 2277,325 2275,422 2195,437" fill="url(#cubeL)" stroke="#63676c" strokeWidth="1" />
    <polygon points="2184,352 2211,352 2211,415 2184,416" fill="#8b9198" opacity="0.55" />
    <path d="M2194 333V437" stroke="#63676c" strokeWidth="1" fill="none" />
    <g fill="#5a5e65" fontFamily="Inter, sans-serif" fontWeight="700" fontSize="24">
      <text transform="translate(2156 388) skewY(6) scale(.46 1.35)">LEFT</text>
      <text transform="translate(2207 396) skewY(-5) scale(.7 1.3)">FRONT</text>
    </g>

    {/* crosshair */}
    <path d="M1975.5 568V723" stroke="#8a8ae0" strokeWidth="1.5" fill="none" />
    <path d="M1916 656L2006 679" stroke="#9be88a" strokeWidth="1.5" fill="none" />
    <path d="M1932 677L2064 660" stroke="#f08a8a" strokeWidth="1.5" fill="none" />
  </svg>
);

const Canvas = () => (
  <div className="relative flex-1 bg-[#212830]">
    <Drawing />
    <div className="absolute left-[34px] top-[9px] flex h-[32px] items-center text-[22px] tracking-[1px] text-[#a8abb0]">
      <span className="text-[18px]">+</span>
      <span className="ml-[21px] h-[32px] w-[1px] bg-[#a8abb0]" />
      <span className="ml-[12px]">Custom View</span>
      <span className="ml-[14px] h-[32px] w-[1px] bg-[#a8abb0]" />
      <span className="ml-[12px]">X-Ray</span>
    </div>
    <div className="absolute left-[1790px] top-[342px] flex h-[23px] w-[100px] items-center justify-between rounded-[7px] bg-[#5f6872] pl-[8px] pr-[10px] text-[21px] leading-none text-[#252c35]">
      WCS
      <svg viewBox="0 0 18 12" className="h-[12px] w-[18px]"><path d="M1 1H17L9 11Z" fill="#8a939c" stroke="#252c35" strokeWidth="1" /></svg>
    </div>
    <div className="absolute left-[1624px] top-[488px] flex h-[40px] w-[224px] items-center border-[3px] border-black bg-[#989898] pb-[2px] pl-[2px] text-[21.5px] tracking-[0.2px] text-[#111111]">Specify base point:</div>

    {/* command line */}
    <div className="absolute left-[582px] top-[1279px] h-[185px] w-[920px] bg-[#3c4554] pl-[10px] pt-[5px] text-[20px] leading-[30px] text-[#b9bcc2]">
      <div>Specify a point or [Hor/Ver/Ang/Bisect/Offset]:</div>
      <div>Specify through point:</div>
      <div>Specify through point: *Cancel*</div>
      <div>Command:</div>
      <div>Command:</div>
      <div>Command: _cutbase</div>
      <div className="absolute left-[901px] top-[141px] h-[40px] w-[8px] rounded-full bg-[#8a909c]" />
    </div>
    <div className="absolute left-[502px] top-[1464px] flex h-[50px] w-[1000px] items-center bg-[#3c4554] text-[#f4f4f4]">
      <svg viewBox="0 0 44 30" className="ml-[16px] h-[30px] w-[44px]">{ln('M2 5L10 10L2 15', L)}{ln('M12 24H24', L)}{fl('M32 8H42L37 17Z', '#a0a4aa')}</svg>
      <span className="ml-[30px] flex-1 text-[21px] font-semibold">CUTBASE Specify base point:</span>
      <svg viewBox="0 0 26 26" className="h-[26px] w-[26px]">{ci(13, 13, 13, W, 0, W)}{tx(13, 19, 17, '?', '#2a2f38', 700)}</svg>
      <span className="ml-[18px] h-0 w-0 border-x-[6px] border-t-[9px] border-x-transparent border-t-[#9a9ea6]" />
      <svg viewBox="0 0 26 36" className="ml-[20px] mr-[20px] h-[36px] w-[26px]">{bx(2, 12, 22, 22, L)}{ln('M12 12V34', L)}{ln('M13 4V20', B)}{fl('M13 0L8 7H18Z', B)}</svg>
    </div>
  </div>
);

const MenuIcons = () => (
  <div className="flex items-center">
    <svg viewBox="0 0 40 40" className="h-[40px] w-[40px]">
      <path d="M6 22C4 12 14 6 20 10C24 5 34 6 35 16M10 26C6 18 14 12 20 16C24 12 28 14 28 18" fill="none" stroke="#222" strokeWidth="3" />
      <path d="M12 20C12 26 20 28 22 24" fill="none" stroke="#222" strokeWidth="3" />
      <circle cx="30" cy="29" r="9" fill="#2d7cc0" />
      <path d="M27.5 25V33M32.5 25V33" stroke="#fff" strokeWidth="2" />
    </svg>
    <svg viewBox="0 0 20 34" className="ml-[42px] h-[34px] w-[20px]"><path d="M3 10L16 23L9.5 31V3L16 11L3 24" fill="none" stroke="#222" strokeWidth="2.4" /></svg>
    <svg viewBox="0 0 54 28" className="ml-[38px] h-[28px] w-[54px]">
      <rect x="1.5" y="2" width="45" height="24" rx="6" fill="none" stroke="#6f6f6c" strokeWidth="2" />
      <rect x="4" y="5" width="28" height="18" rx="3" fill="#222" />
      <path d="M26 3L17 15H24L20 25L31 12H24L29 3Z" fill="#fff" stroke="#e8e6df" strokeWidth="1" />
      <path d="M25 5L19 14H25L22 22L29 13H23Z" fill="#222" />
      <rect x="49" y="10" width="3" height="8" rx="1.5" fill="#6f6f6c" />
    </svg>
    <svg viewBox="0 0 36 28" className="ml-[34px] h-[28px] w-[36px]">
      <path d="M2 10C11 1 25 1 34 10M7 15C13 9 23 9 29 15" fill="none" stroke="#222" strokeWidth="3.4" />
      <path d="M12 20C16 17 20 17 24 20L18 27Z" fill="#222" />
    </svg>
    <svg viewBox="0 0 28 30" className="ml-[39px] h-[30px] w-[28px]"><circle cx="12" cy="12" r="9.5" fill="none" stroke="#222" strokeWidth="2.6" /><path d="M19 19L27 28" stroke="#222" strokeWidth="3" /></svg>
    <svg viewBox="0 0 28 34" className="ml-[38px] h-[34px] w-[28px]">
      <rect x="1" y="2" width="26" height="13" rx="6.5" fill="none" stroke="#222" strokeWidth="2" /><circle cx="8" cy="8.5" r="4" fill="#222" />
      <rect x="1" y="18" width="26" height="14" rx="7" fill="#222" /><circle cx="20" cy="25" r="4.5" fill="#e8e6df" />
    </svg>
    <span className="ml-[35px] h-[30px] w-[30px] rounded-full bg-[conic-gradient(#4fd0c0,#3f8fe0,#8a4fd0,#e04f90,#3a3a50,#4fd0c0)]" />
    <span className="ml-[33px] whitespace-pre text-[25.5px] tracking-[0.6px] text-[#1a1a1a]">Thu 24 Oct  12:12</span>
  </div>
);

const MENU = ['File', 'Edit', 'View', 'Insert', 'Format', 'Tools', 'Draw', 'Dimension', 'Modify', 'Window', 'Help'];

// wallpaper strip under the window, just specks of foliage
const foliage = Array.from({ length: 620 }, (_, i) => {
  const x = (i * 137.3) % 2880;
  const set = x < 900 ? ['#1a150c', '#201a0e', '#100d08'] : x < 1900 ? ['#2e2c14', '#14100a', '#3a3618'] : ['#1c2a10', '#263412', '#161e0c'];
  return { x, y: (i * 53.7) % 32, r: 2 + ((i * 7) % 5), c: set[i % 3] };
});

export default function App() {
  return (
    <div className="relative h-[1800px] w-[2880px] overflow-hidden bg-[#14110b] font-['Inter',sans-serif]">
      <div className="absolute bottom-0 left-0 h-[40px] w-full">
        <svg viewBox="0 0 2880 40" className="h-[40px] w-[2880px]">
          {foliage.map((f, i) => <ellipse key={i} cx={f.x} cy={f.y + 8} rx={f.r} ry={f.r + 2} fill={f.c} />)}
        </svg>
      </div>

      <div className="-mb-[18px] h-[66px] bg-[linear-gradient(90deg,#efede7,#e5e3dc)]">
        <div className="flex h-[46px] items-center pl-[41px] pr-[39px]">
          <FaApple className="h-[31px] w-[28px] text-[#111111]" />
          <span className="ml-[39px] text-[25.5px] font-bold text-[#111111]">AutoCAD 2023</span>
          <div className="ml-[48px] flex flex-1 gap-[43px] text-[25px] text-[#111111]">
            {MENU.map(m => <span key={m}>{m}</span>)}
          </div>
          <MenuIcons />
        </div>
      </div>

      <div className="relative flex h-[1722px] w-[2880px] flex-col overflow-hidden rounded-[18px] border-t-2 border-[#9b9d9f] bg-[#3c4554]">
        <div className="relative flex h-[46px] flex-none items-center justify-center">
          <div className="absolute left-[16px] top-[17px] flex gap-[16px]">
            <span className="flex h-[24px] w-[24px] items-center justify-center rounded-full bg-[#ee6a5f]"><span className="h-[8px] w-[8px] rounded-full bg-[#7a1610]" /></span>
            <span className="h-[24px] w-[24px] rounded-full bg-[#f5bf4f]" />
            <span className="h-[24px] w-[24px] rounded-full bg-[#61c554]" />
          </div>
          <svg viewBox="0 0 24 30" className="mt-[8px] h-[30px] w-[24px]"><path d="M1 3Q1 1 3 1H16L23 9V28Q23 29 21 29H3Q1 29 1 28Z" fill="#8a8f99" /><path d="M8 20C9 12 12 10 15 11L16 19" fill="none" stroke="#3d5a9a" strokeWidth="1.5" /></svg>
          <span className="ml-[13px] mt-[8px] whitespace-pre text-[26px] font-bold tracking-[0.1px] text-[#9a9ea6]">Autodesk AutoCAD 2023    conicas.dwg</span>
          <div className="absolute right-0 top-0 flex h-[43px] w-[239px] items-center border-b-2 border-l-2 border-[#262c36] bg-[#4b586b] pl-[8px] text-[24px] text-[#e8e8e8]">
            <svg viewBox="0 0 28 32" className="h-[32px] w-[28px]">{ci(14, 9, 6, '#e8e8e8')}{ln('M2 31V27C2 20 8 17 14 17C20 17 26 20 26 27V31', '#e8e8e8')}</svg>
            <span className="ml-[10px]">Vitor Mendes</span>
            <span className="ml-[17px] h-0 w-0 border-x-[6px] border-t-[9px] border-x-transparent border-t-[#e8e8e8]" />
          </div>
        </div>

        <Toolbar />
        <div className="h-[2px] flex-none bg-[#262c36]" />

        <div className="flex min-h-0 flex-1">
          <LeftPanel />
          <div className="flex min-w-0 flex-1 flex-col">
            <div className="flex min-h-0 flex-1">
              <div className="flex w-[2003px] flex-none flex-col border-r-2 border-[#2b323d]">
                <div className="flex h-[44px] flex-none">
                  <div className="flex w-[48px] items-center justify-center border-l-2 border-r-2 border-[#2b323d]">
                    <svg viewBox="0 0 28 30" className="h-[30px] w-[28px]">{re(1, 1, 12, 13, B)}{re(15, 1, 12, 13)}{re(1, 16, 12, 13)}{re(15, 16, 12, 13)}</svg>
                  </div>
                  <div className="flex w-[46px] items-center justify-center border-r-2 border-[#2b323d]">
                    <svg viewBox="0 0 24 24" className="h-[24px] w-[24px]">{ln('M12 0V24M0 12H24', L)}</svg>
                  </div>
                  <div className="flex w-[258px] items-center bg-[#4d5a6d] pb-[3px] pl-[6px] text-[22px] font-semibold text-[#f0f0f0]">conicas*</div>
                  <div className="flex-1 border-l-2 border-[#2b323d]" />
                </div>
                <Canvas />
              </div>
              <RightPanel />
            </div>
            <StatusBar />
          </div>
        </div>
      </div>
    </div>
  );
}
